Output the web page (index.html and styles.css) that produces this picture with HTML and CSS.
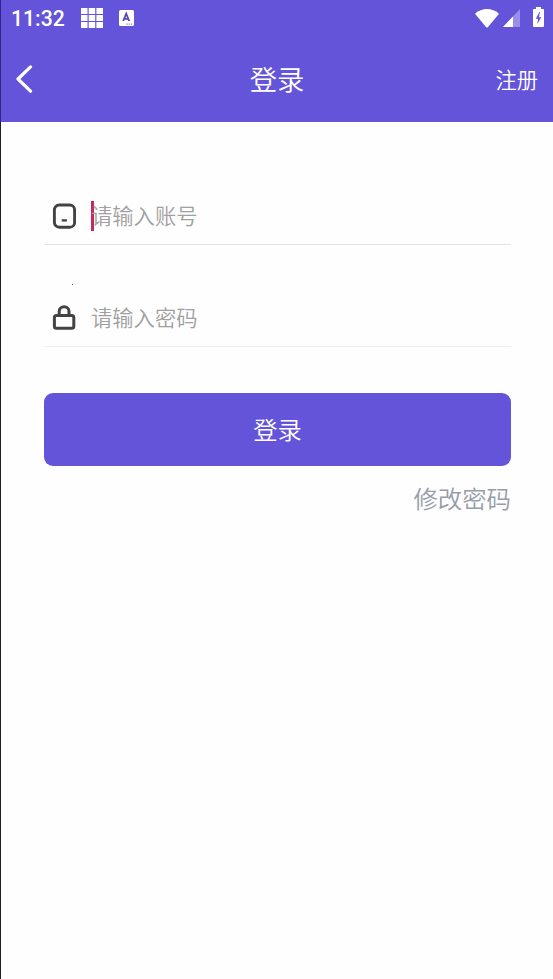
FILE: index.html
```html
<!DOCTYPE html>
<html lang="zh-CN">
<head>
<meta charset="utf-8">
<meta name="viewport" content="width=device-width, initial-scale=1">
<title>登录</title>
<link rel="stylesheet" href="styles.css">
</head>
<body>
<div class="screen">
  <header class="header">
    <div class="status">
      <span class="time">11:32</span>
      <svg class="grid-icon" width="22" height="20" viewBox="0 0 22 20" fill="currentColor"><path d="M0 0h6.5v6H0zM7.7 0h6.5v6H7.7zM15.4 0H22v6h-6.6zM0 7h6.5v6H0zM7.7 7h6.5v6H7.7zM15.4 7H22v6h-6.6zM0 14h6.5v6H0zM7.7 14h6.5v6H7.7zM15.4 14H22v6h-6.6z"/></svg>
      <svg class="key-icon" width="15" height="16" viewBox="0 0 15 16"><rect width="15" height="16" rx="1.5" fill="currentColor"/><path d="M4.2 11 7.2 3.6 10.2 11M5.3 8.8h3.8" fill="none" stroke="#5547b5" stroke-width="1.8"/><path d="M7.5 14.1h1.2m1 0h1.2m1 0h1.2" stroke="#6454da" stroke-width="1"/></svg>
      <span class="spacer"></span>
      <svg class="wifi" width="24" height="19" viewBox="0 0 24 19" fill="currentColor"><path d="M0 4.7C7-1.5 17-1.5 24 4.7L13 18q-1 1-2 0z"/></svg>
      <svg class="signal" width="17" height="18" viewBox="0 0 17 18" fill="currentColor"><path d="M0 18 17 0v18z" opacity=".35"/><path d="M0 18 10 7.4V18z"/></svg>
      <svg class="battery" width="11" height="20" viewBox="0 0 12 20" preserveAspectRatio="none"><path d="M3.2 0h5.6v2H11q1 0 1 1v16q0 1-1 1H1q-1 0-1-1V3q0-1 1-1h2.2z" fill="currentColor"/><path d="M7 5 3 11.8h2.5L4.8 17 9 10.2H6.4L7.7 5z" fill="#6454da"/></svg>
    </div>
    <nav class="bar">
      <svg class="back" width="18" height="28" viewBox="0 0 18 28" fill="none" stroke="currentColor" stroke-width="3.2" stroke-linecap="round" stroke-linejoin="round"><path d="M15.5 1.9 3 14l12.5 12.2"/></svg>
      <h1 class="title">登录</h1>
      <a class="register">注册</a>
    </nav>
  </header>
  <main class="form">
    <div class="field">
      <svg class="field-icon" width="24" height="26" viewBox="0 0 24 26" fill="none" stroke="currentColor" stroke-width="2.9"><rect x="2.4" y="2" width="20.2" height="22.2" rx="4.8"/><path d="M9.7 17.4h5.2" stroke-width="2.3"/></svg>
      <span class="placeholder"><i class="caret"></i><span class="hint">请输入账号</span></span>
    </div>
    <i class="dot"></i>
    <div class="field password">
      <svg class="field-icon" width="24" height="26" viewBox="0 0 24 26" fill="none" stroke="currentColor" stroke-width="3"><rect x="2.4" y="10.6" width="19.4" height="12.7" rx="2"/><path d="M7.2 10V6.4a4.9 4.7 0 0 1 9.8 0V10"/></svg>
      <span class="placeholder"><span class="hint">请输入密码</span></span>
    </div>
    <button class="submit">登录</button>
    <a class="change">修改密码</a>
  </main>
</div>
</body>
</html>
```
FILE: styles.css
```css
* { box-sizing: border-box; }
body {
  margin: 0;
  background: #fefefe;
  font-family: "Noto Sans CJK SC", sans-serif;
  font-weight: 350;
}
.screen {
  min-height: 979px;
  border-left: 1px solid #202024;
}
.header {
  height: 122px;
  margin-left: -1px;
  border-left: 1px solid #30258c;
  background: #6454da;
  color: #fff;
}
.status {
  display: flex;
  height: 36px;
  padding: 0 9px 0 10px;
  align-items: center;
}
.time {
  width: 54px;
  padding-top: 2px;
  font: 500 21.2px/36px Roboto, sans-serif;
  white-space: nowrap;
}
.grid-icon { margin-left: 16px; }
.key-icon { margin-left: 16px; }
.spacer { flex: 1; }
.wifi { margin-right: 4px; }
.signal { margin-right: 13px; }
.battery { margin-top: -2px; }
.bar {
  display: grid;
  grid-template-columns: 1fr auto 1fr;
  height: 86px;
  padding: 0 14px;
  align-items: center;
}
.title {
  margin: 0;
  padding-bottom: 2px;
  font-size: 27.3px;
  font-weight: 350;
  line-height: 40px;
}
.register {
  justify-self: end;
  padding: 0 1px 1px 0;
  font-size: 21.3px;
  line-height: 31px;
}
.form {
  display: flex;
  flex-direction: column;
  padding: 66px 42px 0 43px;
}
.field {
  display: flex;
  height: 57px;
  padding-left: 8px;
  align-items: center;
  border-bottom: 1px solid #e5e5e5;
}
.field-icon { color: #434345; }
.placeholder {
  position: relative;
  margin-left: 15px;
  color: #a0a0a0;
  font-size: 21.3px;
  line-height: 30px;
}
.hint {
  display: block;
  position: relative;
  margin-top: -1px;
  padding-bottom: 1px;
}
.caret {
  position: absolute;
  top: 0;
  left: 0;
  width: 3px;
  height: 30px;
  background: #c72861;
}
.dot {
  width: 1px;
  height: 1px;
  margin: 39px 0 5px 28px;
  background: #555;
}
.password { border-color: #eee; }
.submit {
  height: 73px;
  margin-top: 46px;
  padding: 0 0 2px;
  border: 0;
  border-radius: 9px;
  background: #6454da;
  color: #fff;
  font: 350 24.3px/71px "Noto Sans CJK SC", sans-serif;
}
.change {
  align-self: flex-end;
  margin-top: 14px;
  color: #969ca9;
  font-size: 24.4px;
  line-height: 36px;
}
```
